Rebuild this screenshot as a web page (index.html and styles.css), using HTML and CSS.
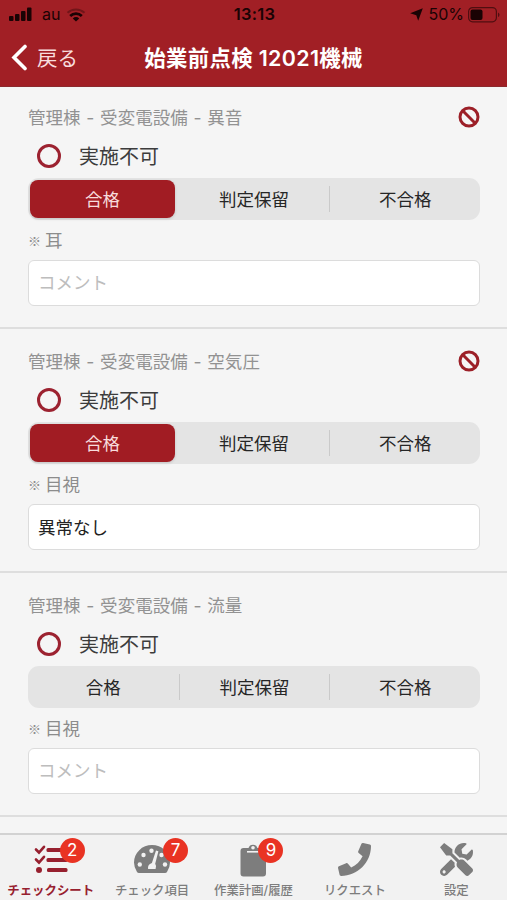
FILE: index.html
```html
<!DOCTYPE html>
<html lang="ja">
<head>
    <meta charset="UTF-8">
    <meta name="viewport" content="width=device-width, initial-scale=1">
    <title>始業前点検</title>
    <link rel="stylesheet" href="styles.css">
</head>
<body>
    <div class="app">
        <header class="header">
            <div class="status">
                <div class="status-left">
                    <svg width="24" height="15" viewBox="0 0 24 15">
                        <rect x="0" y="9" width="4.5" height="5" rx="1"/>
                        <rect x="6" y="7" width="4.5" height="7" rx="1"/>
                        <rect x="12" y="4" width="4.5" height="10" rx="1"/>
                        <rect x="18" y="0.5" width="4.5" height="13.5" rx="1"/>
                    </svg>
                    <span class="carrier">au</span>
                    <svg width="20" height="14" viewBox="0 0 20 14" fill="none" stroke="#1a0304">
                        <path class="line" d="M1.5 4.8a12.5 12.5 0 0 1 17 0" stroke-width="2" opacity=".35"/>
                        <path class="line" d="M4.2 8a8.5 8.5 0 0 1 11.6 0" stroke-width="2.8"/>
                        <path d="M10 13.6l-3.2-3.2a4.6 4.6 0 0 1 6.4 0z" stroke="none"/>
                    </svg>
                </div>
                <div class="clock">13:13</div>
                <div class="status-right">
                    <svg width="13" height="13" viewBox="0 0 13 13"><path d="M12.8.2L8.2 12.8 6.3 7.2.2 5.2z"/></svg>
                    <span class="percent">50%</span>
                    <svg width="32" height="16" viewBox="0 0 32 16">
                        <rect x="0.6" y="0.6" width="27.8" height="14.2" rx="4" fill="none" stroke="#1a0304" stroke-width="1.2" opacity=".6"/>
                        <rect x="2.5" y="2.5" width="12" height="10.5" rx="2"/>
                        <path d="M30 5.5a2.5 2.5 0 0 1 0 4.6z" opacity=".6"/>
                    </svg>
                </div>
            </div>
            <div class="nav">
                <a class="back">
                    <svg width="17" height="27" viewBox="0 0 17 27"><path d="M14 2.5L3 13.5l11 11" fill="none" stroke="#fff" stroke-width="3.6" stroke-linecap="round"/></svg>
                    <span>戻る</span>
                </a>
                <h1>始業前点検 12021機械</h1>
            </div>
        </header>

        <main class="list">
            <section class="item">
                <div class="item-head">
                    <h2>管理棟 - 受変電設備 - 異音</h2>
                    <svg class="ban" width="22" height="22" viewBox="0 0 22 22"><circle cx="11" cy="11" r="9"/><path d="M4.8 4.8l12.4 12.4"/></svg>
                </div>
                <div class="skip"><span class="radio"></span><span>実施不可</span></div>
                <div class="segment">
                    <button class="active">合格</button>
                    <button>判定保留</button>
                    <button class="divided">不合格</button>
                </div>
                <p class="note"><span>※</span>耳</p>
                <input class="comment" type="text" placeholder="コメント">
            </section>

            <section class="item">
                <div class="item-head">
                    <h2>管理棟 - 受変電設備 - 空気圧</h2>
                    <svg class="ban" width="22" height="22" viewBox="0 0 22 22"><circle cx="11" cy="11" r="9"/><path d="M4.8 4.8l12.4 12.4"/></svg>
                </div>
                <div class="skip"><span class="radio"></span><span>実施不可</span></div>
                <div class="segment">
                    <button class="active">合格</button>
                    <button>判定保留</button>
                    <button class="divided">不合格</button>
                </div>
                <p class="note"><span>※</span>目視</p>
                <input class="comment" type="text" placeholder="コメント" value="異常なし">
            </section>

            <section class="item">
                <div class="item-head">
                    <h2>管理棟 - 受変電設備 - 流量</h2>
                </div>
                <div class="skip"><span class="radio"></span><span>実施不可</span></div>
                <div class="segment">
                    <button>合格</button>
                    <button class="divided">判定保留</button>
                    <button class="divided">不合格</button>
                </div>
                <p class="note"><span>※</span>目視</p>
                <input class="comment" type="text" placeholder="コメント">
            </section>
        </main>

        <nav class="tabs">
            <a class="tab current">
                <div class="icon">
                    <svg width="34" height="34" viewBox="0 0 34 34">
                        <path d="M2 6.5l3 3L10 3.8M2 16.5l3 3 5-5.7" fill="none" stroke="currentColor" stroke-width="2.6" stroke-linecap="round"/>
                        <circle cx="5" cy="27" r="3"/>
                        <rect x="12.5" y="5" width="21" height="4" rx="1.5"/>
                        <rect x="12.5" y="15" width="21" height="4" rx="1.5"/>
                        <rect x="13" y="25" width="20.5" height="4" rx="1.5"/>
                    </svg>
                    <span class="badge">2</span>
                </div>
                チェックシート
            </a>
            <a class="tab">
                <div class="icon">
                    <svg width="38" height="34" viewBox="0 0 38 34">
                        <path d="M4 29Q1 24.500 1 19.500a18 17.500 0 0 1 36 0q0 5-3 9.500-.6 1-2 1H6q-1.400 0-2-1z"/>
                        <g fill="#f2f2f2">
                            <circle cx="6.800" cy="21.500" r="2.200"/>
                            <circle cx="10.500" cy="12" r="2.200"/>
                            <circle cx="18.500" cy="7.700" r="2.200"/>
                            <circle cx="28.500" cy="12" r="2.200"/>
                            <circle cx="32" cy="21.500" r="2.200"/>
                            <path d="M23 7.500l2.400.8-3.200 12.500q1.600 2.200.4 5.200h-7.500q-.8-4.400 3.800-6z"/>
                        </g>
                    </svg>
                    <span class="badge badge-wide">7</span>
                </div>
                チェック項目
            </a>
            <a class="tab">
                <div class="icon">
                    <svg width="26" height="34" viewBox="0 0 26 34">
                        <path d="M3.500 5H8.500a4.700 4.700 0 0 1 9 0h5Q26 5 26 8v22.500q0 3-3 3H3.500q-3 0-3-3V8q0-3 3-3z"/>
                        <circle cx="13" cy="4.800" r="1.800" fill="#f2f2f2"/>
                        <path d="M7 8.800h12.500" fill="none" stroke="#f2f2f2" stroke-width="1.600"/>
                    </svg>
                    <span class="badge badge-narrow">9</span>
                </div>
                作業計画/履歴
            </a>
            <a class="tab">
                <div class="icon">
                    <svg width="33" height="33" viewBox="0 0 512 512"><path d="M493.400 24.600l-104-24c-11.300-2.600-22.900 3.300-27.500 13.900l-48 112c-4.200 9.800-1.400 21.300 6.900 28l60.600 49.600c-36 76.700-98.900 140.500-177.200 177.200l-49.600-60.600c-6.800-8.300-18.200-11.100-28-6.900l-112 48C3.900 366.500-2 378.100.6 389.400l24 104C27.100 504.200 36.700 512 48 512c256.100 0 464-207.500 464-464 0-11.200-7.700-20.900-18.600-23.400z"/></svg>
                </div>
                リクエスト
            </a>
            <a class="tab">
                <div class="icon">
                    <svg width="33" height="33" viewBox="0 0 512 512"><path d="M501.100 395.700L384 278.600c-23.100-23.100-57.600-27.600-85.400-13.900L192 158.100V96L64 0 0 64l96 128h62.100l106.600 106.600c-13.600 27.800-9.200 62.300 13.900 85.400l117.100 117.100c14.600 14.600 38.200 14.600 52.700 0l52.700-52.700c14.500-14.600 14.500-38.200 0-52.700zM331.700 225c28.300 0 54.900 11 74.900 31l19.400 19.400c15.800-6.900 30.800-16.500 43.800-29.500 37.100-37.100 49.700-89.300 37.900-136.700-2.200-9-13.500-12.100-20.100-5.500l-74.400 74.400-67.900-11.300L334 98.900l74.400-74.400c6.600-6.600 3.400-17.900-5.700-20.200-47.400-11.700-99.600.9-136.600 37.900-28.500 28.500-41.900 66.100-41.200 103.600l82.100 82.100c8.100-1.900 16.500-2.900 24.700-2.900zm-103.900 82l-56.700-56.700L18.700 402.800c-25 25-25 65.500 0 90.500s65.500 25 90.500 0l123.600-123.600c-7.600-19.900-9.900-41.600-5-62.700zM64 472c-13.200 0-24-10.800-24-24 0-13.300 10.700-24 24-24s24 10.700 24 24c0 13.200-10.700 24-24 24z"/></svg>
                </div>
                設定
            </a>
        </nav>
    </div>
</body>
</html>
```
FILE: styles.css
```css
* {
    box-sizing: border-box;
    margin: 0;
    padding: 0;
    font-family: Inter, "Noto Sans CJK JP", sans-serif;
}
body {
    background-color: #f5f5f5;
}
svg {
    display: block;
    flex: none;
    fill: currentColor;
}
.app {
    display: flex;
    flex-direction: column;
    height: 900px;
    overflow: hidden;
}

/* header */
.header {
    flex: none;
    height: 87px;
    background-color: #a11f25;
    border-bottom: 1px solid #8c2a2e;
}
.status {
    display: grid;
    grid-template-columns: 1fr auto 1fr;
    align-items: center;
    height: 29px;
    padding: 0 7px 0 9px;
    color: #1a0304;
    font-size: 16px;
    line-height: 29px;
}
.status-left,
.status-right {
    display: flex;
    align-items: center;
}
.status-right {
    justify-content: flex-end;
}
.line {
    fill: none;
}
.carrier {
    margin: 0 6px 0 9px;
}
.clock {
    font-size: 16.5px;
    font-weight: 600;
    letter-spacing: 0.3px;
}
.percent {
    margin: 0 4px 0 5px;
}
.nav {
    display: grid;
    grid-template-columns: 1fr auto 1fr;
    align-items: center;
    height: 57px;
    padding: 0 11px;
    color: #fff;
}
.back {
    display: flex;
    align-items: center;
    gap: 9px;
    font-size: 20.5px;
    color: #f8dcdd;
}
.back span {
    padding-bottom: 2px;
}
.nav h1 {
    font-size: 21.4px;
    font-weight: 600;
    line-height: 30px;
    letter-spacing: 0.35px;
}

/* check items */
.list {
    flex: 1;
    min-height: 0;
    overflow: hidden;
}
.item {
    height: 244px;
    padding: 20px 27px 0 28px;
    border-bottom: 2px solid #dedede;
}
.item:first-child {
    height: 242px;
    padding-top: 18px;
}
.item-head {
    display: flex;
    align-items: center;
    justify-content: space-between;
    height: 25px;
}
.item-head h2 {
    font-size: 17.5px;
    font-weight: 400;
    line-height: 25px;
    letter-spacing: 0.05px;
    word-spacing: 0.7px;
    color: #929292;
}
.ban {
    margin-top: -2px;
    fill: none;
    stroke: #9c2028;
    stroke-width: 3;
}
.skip {
    display: flex;
    align-items: center;
    gap: 18px;
    height: 48px;
    padding: 4px 0 0 9px;
    font-size: 20px;
    color: #3c3c3c;
}
.skip span:last-child {
    padding-bottom: 2px;
}
.radio {
    width: 24px;
    height: 24px;
    border: 3px solid #9c2230;
    border-radius: 50%;
}
.segment {
    display: grid;
    grid-template-columns: repeat(3, 1fr);
    align-items: center;
    height: 42px;
    border-radius: 11px;
    background-color: #e4e4e4;
}
.segment button {
    height: 38px;
    padding-bottom: 2px;
    border: none;
    background: none;
    font-size: 17.5px;
    color: #262626;
}
.segment .active {
    width: 145px;
    margin-left: 2px;
    border-radius: 8px;
    background-color: #a11c23;
    color: #f8dcdd;
    box-shadow: 0 1px 3px rgba(0, 0, 0, 0.15);
}
.segment .divided {
    height: 26px;
    border-left: 1px solid #cacaca;
}
.note {
    display: flex;
    align-items: center;
    gap: 4px;
    height: 40px;
    padding-bottom: 1px;
    font-size: 17.5px;
    color: #8c8c8c;
}
.note span {
    padding-top: 2px;
    font-family: "Noto Sans CJK JP", sans-serif;
    font-size: 13px;
    font-feature-settings: "fwid";
}
.comment {
    display: block;
    width: 100%;
    height: 46px;
    padding: 0 9px 2px;
    border: 1px solid #dcdcdc;
    border-radius: 6px;
    background-color: #fff;
    font-size: 17.5px;
    color: #222;
}
.comment::placeholder {
    color: #bdbdbd;
}

/* bottom tabs */
.tabs {
    display: grid;
    grid-template-columns: repeat(5, 1fr);
    flex: none;
    height: 67px;
    border-top: 2px solid #d2d2d2;
    background-color: #f2f2f2;
}
.tab {
    display: flex;
    flex-direction: column;
    align-items: center;
    padding-top: 8px;
    font-size: 12.4px;
    font-weight: 500;
    line-height: 28px;
    white-space: nowrap;
    color: #7d7d7d;
}
.current {
    color: #97202f;
    font-weight: 700;
}
.icon {
    position: relative;
    height: 34px;
}
.badge {
    position: absolute;
    top: -5px;
    left: calc(50% + 9px);
    width: 25px;
    height: 25px;
    border-radius: 50%;
    background-color: #e93323;
    color: #fff;
    font-size: 17px;
    font-weight: 400;
    line-height: 25px;
    text-align: center;
}
.badge-wide {
    left: calc(50% + 11px);
}
.badge-narrow {
    left: calc(50% + 5px);
}
```
